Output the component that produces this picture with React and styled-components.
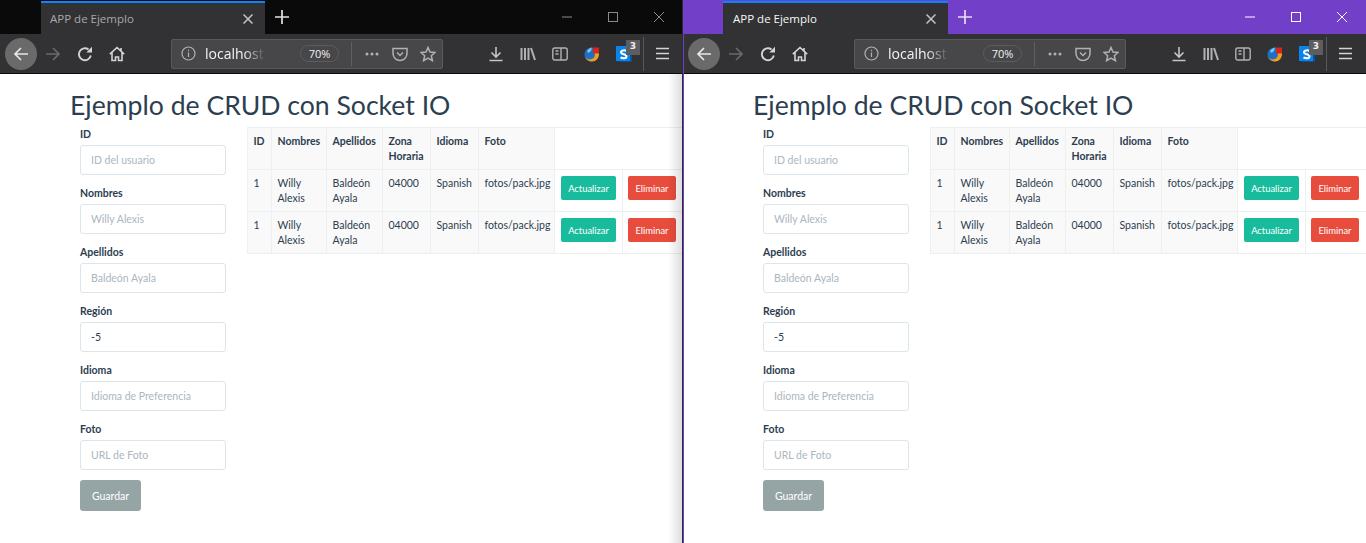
import React from 'react'
import styled, { createGlobalStyle } from 'styled-components'

const Global = createGlobalStyle`
  html, body {
    margin: 0;
    padding: 0;
    background: #fff;
    font-family: Lato, sans-serif;
  }
  * {
    box-sizing: border-box;
  }
`

const Desktop = styled.div`
  display: flex;
  width: 1366px;
  height: 543px;
  overflow: hidden;
`

const Win = styled.div`
  width: 683px;
  height: 543px;
  display: flex;
  flex-direction: column;
  flex: none;
  overflow: hidden;
  border-left: ${p => (p.$active ? '1px solid #7240c8' : '0')};
  border-right: ${p => (p.$active ? '0' : '1px solid #2b2b2b')};
`

const TitleBar = styled.div`
  height: 34px;
  flex: none;
  display: flex;
  background: ${p => (p.$active ? '#723fc9' : '#0a0a0a')};
  padding-left: ${p => (p.$active ? '39px' : '41px')};
`

const Tab = styled.div`
  width: ${p => (p.$active ? '225px' : '224px')};
  height: 33px;
  margin-top: 1px;
  background: #323234;
  border-top: 2px solid #0a84ff;
  display: flex;
  align-items: center;
  justify-content: space-between;
  padding: 0 12px 0 ${p => (p.$active ? '10px' : '9px')};
  font-family: "Open Sans", sans-serif;
  font-size: 11.5px;
  color: ${p => (p.$active ? '#f6f6f6' : '#a8a8aa')};
`

const NewTab = styled.div`
  width: 34px;
  display: flex;
  align-items: center;
  justify-content: center;
`

const Controls = styled.div`
  margin-left: auto;
  display: flex;
  align-items: center;
  gap: 36px;
  padding-right: ${p => (p.$active ? '19px' : '18px')};
`

const NavBar = styled.div`
  height: 40px;
  flex: none;
  display: flex;
  align-items: center;
  background: #323234;
  border-bottom: 1px solid #0c0c0d;
  padding-left: ${p => (p.$active ? '4px' : '5px')};
`

const BackButton = styled.div`
  width: 32px;
  height: 32px;
  border-radius: 50%;
  background: #6a6a6b;
  display: flex;
  align-items: center;
  justify-content: center;
  flex: none;
`

const NavIcon = styled.div`
  width: 32px;
  display: flex;
  align-items: center;
  justify-content: center;
  flex: none;
`

const UrlBar = styled.div`
  width: 272px;
  height: 30px;
  margin-left: 38px;
  flex: none;
  display: flex;
  align-items: center;
  background: #474749;
  border: 1px solid #5a5a5c;
  border-radius: 2px;
  padding-left: 9px;
`

const UrlText = styled.div`
  width: 64px;
  margin-left: 9px;
  overflow: hidden;
  white-space: nowrap;
  font-family: "Open Sans", sans-serif;
  font-size: 14px;
  color: #f4f4f4;
  -webkit-mask-image: linear-gradient(to right, #000 60%, transparent 95%);
  mask-image: linear-gradient(to right, #000 60%, transparent 95%);
`

const Zoom = styled.div`
  width: 39px;
  height: 17px;
  margin-left: 31px;
  flex: none;
  border: 1px solid #5c5c5e;
  border-radius: 9px;
  display: flex;
  align-items: center;
  justify-content: center;
  font-family: "Open Sans", sans-serif;
  font-size: 11px;
  color: #f0f0f0;
`

const UrlSep = styled.div`
  width: 1px;
  height: 24px;
  flex: none;
  background: #5f5f61;
  margin: 0 12px;
`

const UrlIcons = styled.div`
  display: flex;
  align-items: center;
  gap: 12px;
`

const Tools = styled.div`
  display: flex;
  align-items: center;
  gap: 16px;
  margin-left: 45px;
`

const Badge = styled.div`
  position: relative;
  width: 16px;
  height: 16px;
`

const Count = styled.div`
  position: absolute;
  top: -6px;
  left: 10px;
  width: 14px;
  height: 15px;
  background: #5d5d5f;
  color: #f0f0f0;
  font-family: "DejaVu Sans", sans-serif;
  font-size: 9px;
  font-weight: 700;
  text-align: center;
  line-height: 13px;
`

const ToolSep = styled.div`
  width: 1px;
  height: 34px;
  background: #5a5a5c;
  margin-left: -5px;
`

const Menu = styled.div`
  margin-left: 12px;
  display: flex;
`

const Page = styled.div`
  position: relative;
  flex: 1;
  background: #fff;
  color: #2c3e50;
  padding-left: ${p => (p.$active ? '69px' : '70px')};
  overflow: hidden;
  &::after {
    content: "";
    display: ${p => (p.$active ? 'none' : 'block')};
    position: absolute;
    top: 0;
    right: 0;
    bottom: 0;
    width: 14px;
    background: linear-gradient(to right, rgba(0, 0, 0, 0), rgba(0, 0, 0, 0.13));
  }
`

const Title = styled.h1`
  margin: 15px 0 0;
  font-size: 26.6px;
  line-height: 33px;
  font-weight: 400;
  white-space: nowrap;
`

const Columns = styled.div`
  display: flex;
  margin-top: 5px;
`

const Form = styled.form`
  width: 156px;
  margin: 0 0 0 10px;
  flex: none;
`

const Field = styled.div`
  margin-bottom: 11px;
`

const Label = styled.label`
  display: block;
  font-size: 10.5px;
  font-weight: 700;
  line-height: 15px;
  height: 18px;
`

const Input = styled.input`
  display: block;
  width: 146px;
  height: 30px;
  padding: 0 10px;
  border: 1px solid #dce4ec;
  border-radius: 3px;
  background: #fff;
  font-family: Lato, sans-serif;
  font-size: 10.5px;
  color: #2c3e50;
  &::placeholder {
    color: #acb6c0;
    opacity: 1;
  }
`

const SaveButton = styled.button`
  display: block;
  width: 61px;
  height: 31px;
  margin-top: -1px;
  padding: 0;
  border: 0;
  border-radius: 3px;
  background: #95a5a6;
  color: #fff;
  font-family: Lato, sans-serif;
  font-size: 10.5px;
`

const TableWrap = styled.div`
  margin-left: 11px;
  flex: none;
`

const Table = styled.table`
  width: 436px;
  table-layout: fixed;
  border-collapse: collapse;
  font-size: 10.5px;
  line-height: 15px;
`

const Th = styled.th`
  height: 41px;
  padding: 6px 5.5px 5px;
  vertical-align: top;
  text-align: left;
  font-weight: 700;
  border: 1px solid #ecf0f1;
  background: ${p => (p.$plain ? '#fff' : '#f9f9f9')};
`

const Td = styled.td`
  height: 41px;
  padding: 6px 5.5px 5px;
  vertical-align: top;
  border: 1px solid #ecf0f1;
  background: ${p => (p.$plain ? '#fff' : '#f9f9f9')};
`

const RowButton = styled.button`
  display: block;
  width: ${p => (p.$danger ? '48px' : '55px')};
  height: 24px;
  margin-left: ${p => (p.$danger ? '-0.5px' : '0.5px')};
  padding: 0;
  border: 0;
  border-radius: 2px;
  background: ${p => (p.$danger ? '#e74c3c' : '#18bc9c')};
  color: #fff;
  font-family: Lato, sans-serif;
  font-size: 9.4px;
`

const Icon = ({ w = 16, h = 16, c = '#b1b1b3', children, sw = 1.6 }) => (
  <svg width={w} height={h} viewBox={`0 0 ${w} ${h}`} fill="none" stroke={c} strokeWidth={sw}>
    {children}
  </svg>
)

const FoxIcon = () => (
  <svg width="16" height="16" viewBox="0 0 16 16">
    <circle cx="7.500" cy="8.500" r="7" fill="#1f6fc4" />
    <path d="M3 5a7 7 0 0 1 5-3.500L7 5 4.500 7z" fill="#7fc4ee" />
    <path d="M9 3c4 0 6 2 6 5 0 4-3 7.500-7 7.500-3 0-6-2-7.500-5 2 3 5 3.500 7.500 2.500s3.500-3 2.500-6z" fill="#f0a01d" />
    <rect x="9" y="1.500" width="6" height="6" fill="#d9261c" />
  </svg>
)

const SkypeIcon = () => (
  <svg width="16" height="16" viewBox="0 0 16 16">
    <rect x="3" y="3" width="13" height="13" fill="#0b4f96" />
    <rect x="0" y="0" width="14" height="15" fill="#0a84e8" />
    <path d="M10.500 5C9 4 5 4 5 6.200c0 2.800 5.500 1.300 5.500 4.200 0 2.200-4 2.200-6 1" fill="none" stroke="#fff" strokeWidth="2" />
  </svg>
)

const BrowserChrome = ({ active }) => {
  const ctl = active ? '#ffffff' : '#8a8a8a'
  return (
    <>
      <TitleBar $active={active}>
        <Tab $active={active}>
          APP de Ejemplo
          <Icon w={10} h={10} c="#c4c4c6" sw={1.5}>
            <path d="M.5.5l9 9M9.500.5l-9 9" />
          </Icon>
        </Tab>
        <NewTab>
          <Icon w={14} h={14} c={active ? '#e6dcf6' : '#e4e4e4'} sw={1.7}>
            <path d="M7 0v14M0 7h14" />
          </Icon>
        </NewTab>
        <Controls $active={active}>
          <Icon w={10} h={10} c={ctl} sw={1}>
            <path d="M0 5h10" />
          </Icon>
          <Icon w={10} h={10} c={ctl} sw={1}>
            <rect x=".5" y=".5" width="9" height="9" />
          </Icon>
          <Icon w={10} h={10} c={ctl} sw={1}>
            <path d="M0 0l10 10M10 0L0 10" />
          </Icon>
        </Controls>
      </TitleBar>
      <NavBar $active={active}>
        <BackButton>
          <Icon w={16} h={16} c="#e8e8e8" sw={1.7}>
            <path d="M15 8H2M8 2L2 8l6 6" />
          </Icon>
        </BackButton>
        <NavIcon>
          <Icon w={16} h={16} c="#6a6a6b" sw={1.7}>
            <path d="M1 8h13M8 2l6 6-6 6" />
          </Icon>
        </NavIcon>
        <NavIcon>
          <Icon w={16} h={16} c="#d4d4d4" sw={1.9}>
            <path d="M13.800 9.500A6 6 0 1 1 11.500 3.400" />
            <path d="M15 .8v5.700H9.300z" fill="#d4d4d4" stroke="none" />
          </Icon>
        </NavIcon>
        <NavIcon>
          <Icon w={16} h={16} c="#d4d4d4" sw={1.6}>
            <path d="M.8 8.200L8 1.500l7.200 6.700M3 6.500v8h3.500v-3.500h3v3.500H13v-8M12 2v3" />
          </Icon>
        </NavIcon>
        <UrlBar>
          <Icon w={15} h={15} c="#b1b1b3" sw={1.2}>
            <circle cx="7.500" cy="7.500" r="6.500" />
            <path d="M7.500 6.500v4.500M7.500 3.800v1.500" />
          </Icon>
          <UrlText>localhost:</UrlText>
          <Zoom>70%</Zoom>
          <UrlSep />
          <UrlIcons>
            <Icon w={16} h={16} c="#b1b1b3" sw={0}>
              <circle cx="3" cy="8" r="1.500" fill="#b1b1b3" />
              <circle cx="8" cy="8" r="1.500" fill="#b1b1b3" />
              <circle cx="13" cy="8" r="1.500" fill="#b1b1b3" />
            </Icon>
            <Icon w={16} h={16} c="#b1b1b3" sw={1.5}>
              <path d="M1 2.500h14v5a7 7 0 0 1-14 0z" />
              <path d="M5 6.500l3 3 3-3" />
            </Icon>
            <Icon w={16} h={16} c="#b1b1b3" sw={1.5}>
              <path d="M8 1.500l2 4.500 5 .5-3.700 3.300 1.100 4.900L8 12.200l-4.400 2.500 1.100-4.900L1 6.500l5-.5z" />
            </Icon>
          </UrlIcons>
        </UrlBar>
        <Tools>
          <Icon w={16} h={16} c="#c4c4c6" sw={1.6}>
            <path d="M8 1v10M3.500 6.500L8 11l4.500-4.500M1.500 14.500h13" />
          </Icon>
          <Icon w={16} h={16} c="#b1b1b3" sw={2}>
            <path d="M1.500 2v12M5 2v12M8.500 2v12M11 2l4 12" />
          </Icon>
          <Icon w={16} h={16} c="#b1b1b3" sw={1.4}>
            <rect x=".8" y="2" width="14.400" height="12" rx="2" />
            <path d="M9 2v12M3.500 5h3M3.500 8h3" />
          </Icon>
          <FoxIcon />
          <Badge>
            <SkypeIcon />
            <Count>3</Count>
          </Badge>
          <ToolSep />
        </Tools>
        <Menu>
          <Icon w={13} h={13} c="#d4d4d4" sw={1.6}>
            <path d="M0 1.500h13M0 6.500h13M0 11.500h13" />
          </Icon>
        </Menu>
      </NavBar>
    </>
  )
}

const fields = [
  { label: 'ID', placeholder: 'ID del usuario' },
  { label: 'Nombres', placeholder: 'Willy Alexis' },
  { label: 'Apellidos', placeholder: 'Baldeón Ayala' },
  { label: 'Región', value: '-5' },
  { label: 'Idioma', placeholder: 'Idioma de Preferencia' },
  { label: 'Foto', placeholder: 'URL de Foto' },
]

const columns = [
  { title: 'ID', width: 24 },
  { title: 'Nombres', width: 55 },
  { title: 'Apellidos', width: 56 },
  { title: 'Zona Horaria', width: 48 },
  { title: 'Idioma', width: 48 },
  { title: 'Foto', width: 76 },
]

const Crud = () => (
  <>
    <Title>Ejemplo de CRUD con Socket IO</Title>
    <Columns>
      <Form>
        {fields.map(f => (
          <Field key={f.label}>
            <Label>{f.label}</Label>
            <Input placeholder={f.placeholder} defaultValue={f.value} />
          </Field>
        ))}
        <SaveButton type="button">Guardar</SaveButton>
      </Form>
      <TableWrap>
        <Table>
          <colgroup>
            {columns.map(c => (
              <col key={c.title} width={c.width} />
            ))}
            <col width={68} />
            <col width={61} />
          </colgroup>
          <thead>
            <tr>
              {columns.map(c => (
                <Th key={c.title}>{c.title}</Th>
              ))}
              <Th $plain colSpan={2} />
            </tr>
          </thead>
          <tbody>
            {[0, 1].map(i => (
              <tr key={i}>
                <Td>1</Td>
                <Td>Willy Alexis</Td>
                <Td>Baldeón Ayala</Td>
                <Td>04000</Td>
                <Td>Spanish</Td>
                <Td>fotos/pack.jpg</Td>
                <Td $plain>
                  <RowButton type="button">Actualizar</RowButton>
                </Td>
                <Td $plain>
                  <RowButton type="button" $danger>Eliminar</RowButton>
                </Td>
              </tr>
            ))}
          </tbody>
        </Table>
      </TableWrap>
    </Columns>
  </>
)

const BrowserWindow = ({ active }) => (
  <Win $active={active}>
    <BrowserChrome active={active} />
    <Page $active={active}>
      <Crud />
    </Page>
  </Win>
)

export default function App() {
  return (
    <>
      <Global />
      <Desktop>
        <BrowserWindow />
        <BrowserWindow active />
      </Desktop>
    </>
  )
}
